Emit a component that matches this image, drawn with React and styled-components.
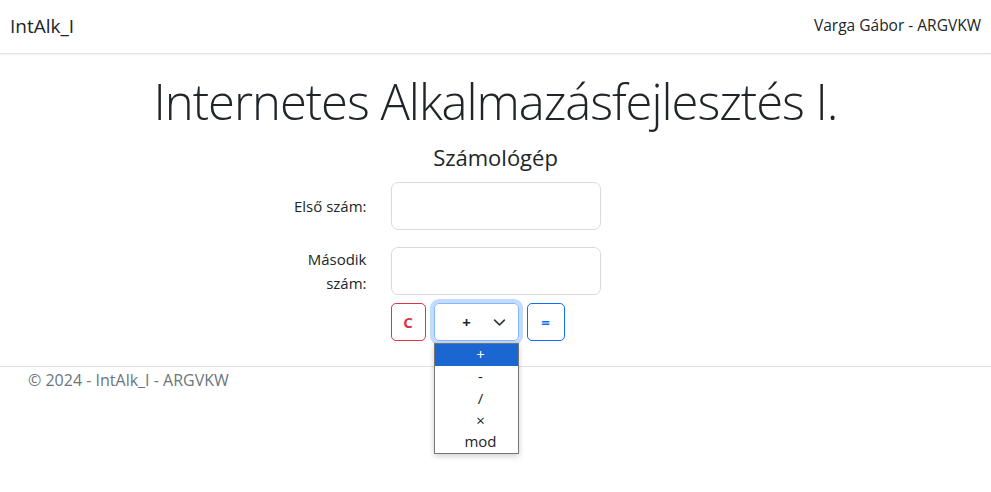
import React from "react";
import styled, { createGlobalStyle } from "styled-components";

const Global = createGlobalStyle`
  html, body { margin: 0; padding: 0; }
  body {
    font-family: "Open Sans", "Noto Sans", sans-serif;
    font-size: 16px;
    line-height: 1.5;
    color: #212529;
    background: #fff;
  }
  * { box-sizing: border-box; }
`;

const Page = styled.div`
  min-height: 492px;
  display: flex;
  flex-direction: column;
`;

const Navbar = styled.header`
  height: 54px;
  border-bottom: 1px solid #e2e2e2;
  box-shadow: 0 1px 2px rgba(0,0,0,0.04);
  display: flex;
  align-items: center;
  justify-content: space-between;
  padding: 0 10px;
`;

const Brand = styled.div`
  font-size: 19px;
  color: #212529;
  margin-top: -1px;
`;

const User = styled.div`
  font-size: 15.5px;
  color: #212529;
  margin-top: -1px;
`;

const Main = styled.main`
  display: flex;
  flex-direction: column;
  align-items: center;
  padding-top: 18px;
`;

const Title = styled.h1`
  margin: 0;
  font-size: 49px;
  font-weight: 300;
  line-height: 1.2;
  letter-spacing: -1.04px;
`;

const Subtitle = styled.h4`
  margin: 13px 0 12px;
  font-size: 22px;
  font-weight: 400;
  line-height: 1.2;
`;

const Form = styled.div`
  width: 100%;
  display: flex;
  flex-direction: column;
`;

const Row = styled.div`
  display: grid;
  grid-template-columns: 1fr 210px 1fr;
  column-gap: 24px;
  margin-bottom: ${(p) => p.$mb || 0}px;
`;

const Label = styled.label`
  justify-self: end;
  align-self: center;
  width: 90px;
  text-align: right;
  font-size: 15px;
  line-height: 24px;
`;

const Input = styled.input`
  grid-column: 2;
  height: 48px;
  width: 210px;
  border: 1px solid #d7dae0;
  border-radius: 7px;
  font-size: 20px;
  padding: 8px 16px;
  background: #fff;
`;

const Buttons = styled.div`
  grid-column: 2;
  display: flex;
  gap: 8px;
  align-items: center;
`;

const OutlineButton = styled.button`
  height: 38px;
  min-width: ${(p) => p.$w}px;
  padding: 0 11px;
  border: 1px solid ${(p) => p.$color};
  color: ${(p) => p.$color};
  background: #fff;
  border-radius: 5px;
  font-family: inherit;
  font-size: 15px;
  font-weight: 700;
`;

const SelectWrap = styled.div`
  position: relative;
`;

const SelectBox = styled.div`
  width: 85px;
  height: 38px;
  border: 1px solid #86b7fe;
  border-radius: 5px;
  box-shadow: 0 0 0 4px rgba(13, 110, 253, 0.25);
  display: flex;
  align-items: center;
  padding: 0 12px;
  font-weight: 700;
  font-size: 15px;
`;

const SelectValue = styled.span`
  flex: 1;
  text-align: center;
  padding-right: 6px;
`;

const Popup = styled.ul`
  position: absolute;
  top: 40px;
  left: 0;
  width: 85px;
  margin: 0;
  padding: 0;
  list-style: none;
  background: #fff;
  border: 1px solid #767676;
  box-shadow: 0 2px 6px rgba(0, 0, 0, 0.2);
  z-index: 10;
`;

const Option = styled.li`
  height: 21.8px;
  line-height: 21.8px;
  text-align: center;
  padding-left: 9px;
  font-size: 15px;
  background: ${(p) => (p.$active ? "#1a67d2" : "transparent")};
  color: ${(p) => (p.$active ? "#fff" : "#212529")};
`;

const Footer = styled.footer`
  margin-top: 25px;
  border-top: 1px solid #e2e2e2;
  padding: 1px 28px;
  font-size: 16px;
  color: #6c757d;
  line-height: 24px;
`;

const Chevron = () => (
  <svg width="13" height="9" viewBox="0 0 16 11" fill="none">
    <path d="M2 2.5l6 6 6-6" stroke="#343a40" strokeWidth="2" strokeLinecap="round" strokeLinejoin="round" />
  </svg>
);

export default function App() {
  const ops = ["+", "-", "/", "×", "mod"];
  return (
    <Page>
      <Global />
      <Navbar>
        <Brand>IntAlk_I</Brand>
        <User>Varga Gábor - ARGVKW</User>
      </Navbar>
      <Main>
        <Title>Internetes Alkalmazásfejlesztés I.</Title>
        <Subtitle>Számológép</Subtitle>
        <Form>
          <Row $mb={17}>
            <Label>Első szám:</Label>
            <Input type="text" />
          </Row>
          <Row $mb={8}>
            <Label>Második szám:</Label>
            <Input type="text" />
          </Row>
          <Row>
            <Buttons>
              <OutlineButton $color="#dc3545" $w={35}>C</OutlineButton>
              <SelectWrap>
                <SelectBox>
                  <SelectValue>+</SelectValue>
                  <Chevron />
                </SelectBox>
                <Popup>
                  {ops.map((o, i) => (
                    <Option key={o} $active={i === 0}>{o}</Option>
                  ))}
                </Popup>
              </SelectWrap>
              <OutlineButton $color="#0d6efd" $w={38}>=</OutlineButton>
            </Buttons>
          </Row>
        </Form>
      </Main>
      <Footer>© 2024 - IntAlk_I - ARGVKW</Footer>
    </Page>
  );
}
